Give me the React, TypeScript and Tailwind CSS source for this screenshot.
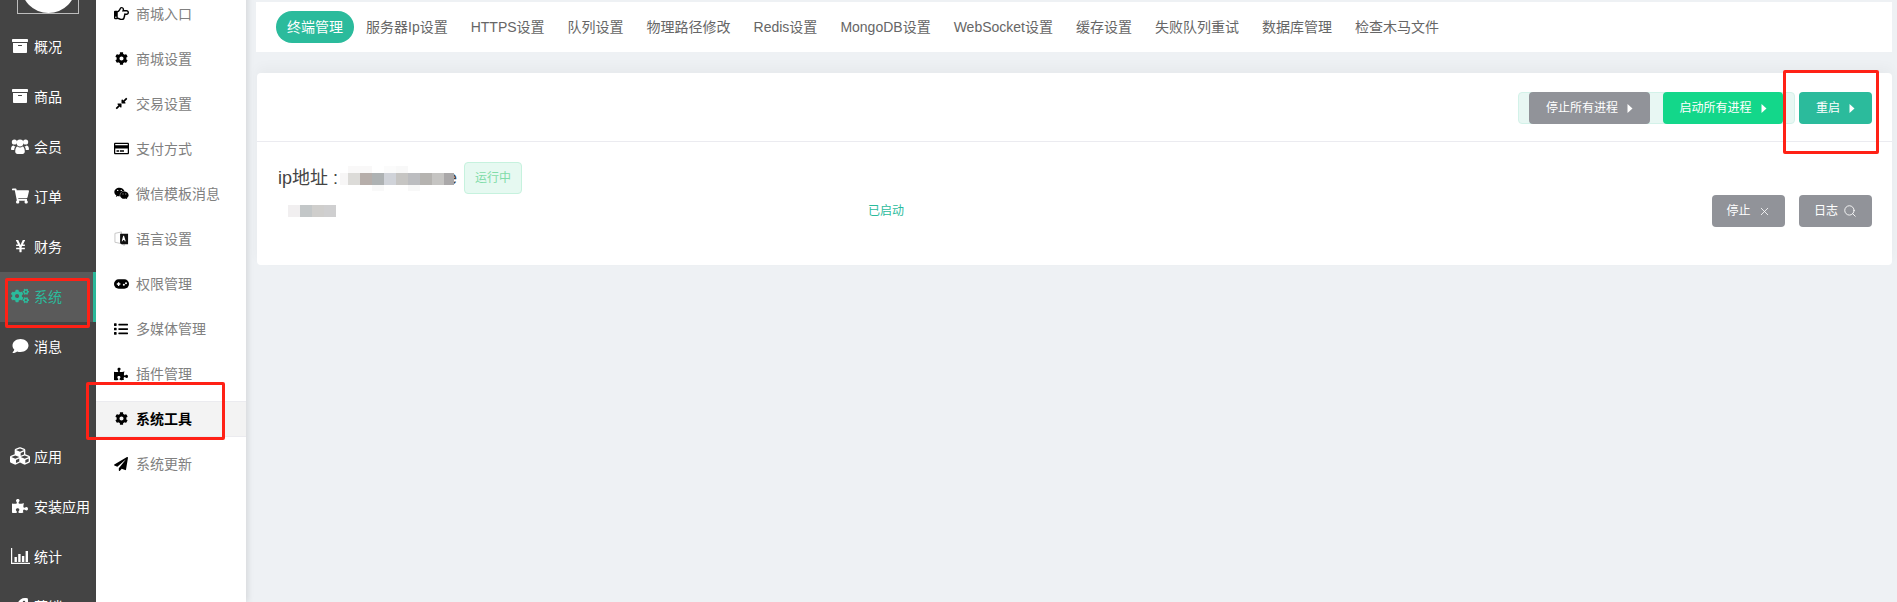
import React from 'react';
import {
  FaArchive,
  FaShoppingCart,
  FaYenSign,
  FaCogs,
  FaComment,
  FaCubes,
  FaPuzzlePiece,
  FaRocket,
  FaRegHandPointRight,
  FaCog,
  FaCompressAlt,
  FaRegCreditCard,
  FaWeixin,
  FaList,
  FaPaperPlane,
} from 'react-icons/fa';
import { X, Search } from 'lucide-react';

type IconProps = { className?: string };

// FontAwesome 4 shapes that the icon packages no longer ship
function UsersIcon({ className }: IconProps) {
  return (
    <svg viewBox="0 0 18 15" fill="currentColor" className={className}>
      <circle cx="3.4" cy="3" r="2.6" />
      <circle cx="14.6" cy="3" r="2.6" />
      <path d="M0 10.5C0 8 1 6.5 2.5 6.5c.6.7 1.3 1 2 1-.9 1-1.3 2-1.3 3.5H1c-.6 0-1-.2-1-.5Z" />
      <path d="M18 10.5C18 8 17 6.5 15.5 6.5c-.6.7-1.3 1-2 1 .9 1 1.3 2 1.3 3.5H17c.6 0 1-.2 1-.5Z" />
      <circle cx="9" cy="4" r="3.4" />
      <path d="M4.2 12.5c0-3 1-5 2.4-5 .7.6 1.5.9 2.4.9s1.700-.3 2.400-.9c1.400 0 2.400 2 2.400 5 0 1.500-1 2.500-2.200 2.500H6.400c-1.200 0-2.200-1-2.200-2.500Z" />
    </svg>
  );
}

function BarsIcon({ className }: IconProps) {
  return (
    <svg viewBox="0 0 19 16" fill="currentColor" className={className}>
      <path d="M0 0h1.200v14.800H19V16H0Z" />
      <rect x="3.500" y="9" width="2.400" height="5" />
      <rect x="7.200" y="6" width="2.400" height="8" />
      <rect x="10.900" y="8" width="2.400" height="6" />
      <rect x="14.600" y="3" width="2.400" height="11" />
    </svg>
  );
}

function LanguageIcon({ className }: IconProps) {
  return (
    <svg viewBox="0 0 16 16" className={className}>
      <path d="M1 2.500 8 1v12.500L1 12Z" fill="none" stroke="#c4c4c4" strokeWidth="1" />
      <path d="M8 13.500 11 15.500V13.500" fill="none" stroke="#c4c4c4" strokeWidth="1" />
      <path d="M6.500 3H15V14H8L6.500 13Z" fill="#111111" />
      <path d="M10.700 5 12.500 11H11.400L10.900 9.500H9.600L9.200 11H8.200L9.800 5Z" fill="#ffffff" />
    </svg>
  );
}

function GamepadIcon({ className }: IconProps) {
  return (
    <svg viewBox="0 0 16 10" className={className}>
      <rect x="0" y="0" width="16" height="10" rx="5" fill="currentColor" />
      <path d="M3 4.200h1.200V3h1.400v1.200h1.200v1.500H5.600V7H4.200V5.700H3Z" fill="#ffffff" />
      <circle cx="10.500" cy="5.800" r="1.100" fill="#ffffff" />
      <circle cx="12.800" cy="4.200" r="1.100" fill="#ffffff" />
    </svg>
  );
}

const mainMenu = [
  { label: '概况', icon: FaArchive, size: 'h-[16px] w-[16px]' },
  { label: '商品', icon: FaArchive, size: 'h-[16px] w-[16px]' },
  { label: '会员', icon: UsersIcon, size: 'h-[15px] w-[18px]' },
  { label: '订单', icon: FaShoppingCart, size: 'h-[16px] w-[17px]' },
  { label: '财务', icon: FaYenSign, size: 'h-[14px] w-[11px]' },
  { label: '系统', icon: FaCogs, size: 'h-[16px] w-[18px]', active: true },
  { label: '消息', icon: FaComment, size: 'h-[16px] w-[17px]' },
];

const appMenu = [
  { label: '应用', icon: FaCubes, size: 'h-[20px] w-[20px]' },
  { label: '安装应用', icon: FaPuzzlePiece, size: 'h-[16px] w-[16px]' },
  { label: '统计', icon: BarsIcon, size: 'h-[16px] w-[19px]' },
  { label: '营销', icon: FaRocket, size: 'h-[16px] w-[16px]' },
];

const subMenu = [
  { label: '商城入口', icon: FaRegHandPointRight, size: 'h-[15px] w-[15px]' },
  { label: '商城设置', icon: FaCog, size: 'h-[13px] w-[13px]' },
  { label: '交易设置', icon: FaCompressAlt, size: 'h-[13px] w-[13px]' },
  { label: '支付方式', icon: FaRegCreditCard, size: 'h-[15px] w-[15px]' },
  { label: '微信模板消息', icon: FaWeixin, size: 'h-[15px] w-[15px]' },
  { label: '语言设置', icon: LanguageIcon, size: 'h-[15px] w-[15px]' },
  { label: '权限管理', icon: GamepadIcon, size: 'h-[10px] w-[15px]' },
  { label: '多媒体管理', icon: FaList, size: 'h-[14px] w-[14px]' },
  { label: '插件管理', icon: FaPuzzlePiece, size: 'h-[14px] w-[14px]' },
  { label: '系统工具', icon: FaCog, size: 'h-[13px] w-[13px]', active: true },
  { label: '系统更新', icon: FaPaperPlane, size: 'h-[14px] w-[14px]' },
];

const tabs = [
  '服务器Ip设置',
  'HTTPS设置',
  '队列设置',
  '物理路径修改',
  'Redis设置',
  'MongoDB设置',
  'WebSocket设置',
  '缓存设置',
  '失败队列重试',
  '数据库管理',
  '检查木马文件',
];

const mosaicTop = ['w-[8px] bg-white', 'w-[24px] bg-[#f9f8f8]', 'w-[12px] bg-white', 'w-[12px] bg-[#fbfbfb]', 'w-[12px] bg-[#f8f8f8]'];
const mosaicMiddle = ['bg-[#f7f6f6] w-[8px]', 'bg-[#dcdbd8] w-[12px]', 'bg-[#b6aeaa] w-[12px]', 'bg-[#aeb2b3] w-[12px]', 'bg-[#d0d3d9] w-[12px]', 'bg-[#c6c5c3] w-[12px]', 'bg-[#bcbdc0] w-[12px]', 'bg-[#b5b3b0] w-[12px]', 'bg-[#c5c4c2] w-[12px]', 'bg-[#aaa8a9] w-[10px]'];
const mosaicBottom = ['w-[32px] bg-white', 'w-[12px] bg-[#f9f9f9]', 'w-[24px] bg-white', 'w-[12px] bg-[#f8f8f8]'];
const mosaicRow = ['bg-[#f1eff0]', 'bg-[#c3c7c8]', 'bg-[#cfcecc]', 'bg-[#cfcfd0]'];

function Caret() {
  return (
    <svg width="6" height="9" viewBox="0 0 6 9" className="ml-[9px]">
      <polygon points="0.5,0 5.5,4.5 0.5,9" fill="currentColor" />
    </svg>
  );
}

function ActionButton({ className, children }: { className: string; children: React.ReactNode }) {
  return (
    <div className={`flex h-8 items-center justify-center rounded-[4px] text-xs text-white ${className}`}>
      {children}
    </div>
  );
}

function SideItem({
  label,
  icon: Icon,
  size,
  active,
}: {
  label: string;
  icon: React.ElementType;
  size: string;
  active?: boolean;
}) {
  return (
    <div
      className={`flex h-[50px] items-center border-r-[3px] text-sm ${
        active ? 'border-[#2bbb9c] bg-[#5a5a5a] text-[#2bbb9c]' : 'border-transparent text-white'
      }`}
    >
      <span className="flex w-[34px] justify-center pl-[6px] pb-[2px]">
        <Icon className={size} />
      </span>
      <span className="whitespace-nowrap">{label}</span>
    </div>
  );
}

function Overlay({ className }: { className: string }) {
  return <div className={`pointer-events-none absolute z-20 rounded-[2px] border-[3px] border-[#ff2116] ${className}`} />;
}

export default function App() {
  return (
    <div className="relative flex h-[602px] w-[1897px] overflow-hidden bg-[#eef1f4] font-['Liberation_Sans','Noto_Sans_CJK_SC',sans-serif]">
      {/* Main menu */}
      <aside className="w-[96px] shrink-0 bg-[#444444]">
        <div className="mx-[17px] mb-[8px] h-[14px] overflow-hidden border border-t-0 border-[#bdbdbd]">
          <div className="mx-auto -mt-[42px] h-[55px] w-[55px] rounded-full bg-white" />
        </div>
        {mainMenu.map((item) => (
          <SideItem key={item.label} {...item} />
        ))}
        <div className="h-[60px]" />
        {appMenu.map((item) => (
          <SideItem key={item.label} {...item} />
        ))}
      </aside>

      {/* Sub menu */}
      <nav className="z-10 -mt-[9px] w-[150px] shrink-0 bg-white shadow-[2px_0_6px_rgba(0,0,0,0.1)]">
        {subMenu.map(({ label, icon: Icon, size, active }) => (
          <div key={label} className="flex h-[45px] items-center">
            <div
              className={`flex h-[36px] w-full items-center text-sm ${
                active ? 'border-y border-[#ebebef] bg-[#f3f3f3] font-bold text-black' : 'text-[#808080]'
              }`}
            >
              <span className="flex w-[40px] justify-center pl-[10px] text-black">
                <Icon className={size} />
              </span>
              <span className="whitespace-nowrap">{label}</span>
            </div>
          </div>
        ))}
      </nav>

      {/* Content */}
      <main className="flex-1 pl-[10px] pr-[5px] pt-[2px]">
        <div className="flex h-[50px] items-center gap-px bg-white pl-[20px] text-sm text-[#666666]">
          <div className="flex h-8 items-center rounded-full bg-[#2bbb9c] px-[11px] text-white">终端管理</div>
          {tabs.map((tab) => (
            <div key={tab} className="whitespace-nowrap px-[11px]">
              {tab}
            </div>
          ))}
        </div>

        <div className="ml-px mt-[21px] h-[192px] rounded-[4px] bg-white shadow-[0_-6px_12px_rgba(0,0,0,0.03)]">
          <div className="flex h-[69px] items-start justify-end border-b border-[#ebebf0] pr-5 pt-[19px]">
            <div className="mr-1 flex h-8 items-center gap-[13px] rounded-[4px] border border-[#d3f2e9] bg-[#e8f7f3] pl-[10px] pr-[11px]">
              <ActionButton className="w-[121px] bg-[#919399]">
                停止所有进程
                <Caret />
              </ActionButton>
              <ActionButton className="w-[120px] bg-[#13d78a]">
                启动所有进程
                <Caret />
              </ActionButton>
            </div>
            <ActionButton className="w-[73px] bg-[#2bbb9c]">
              重启
              <Caret />
            </ActionButton>
          </div>

          <div className="px-5 pl-[21px] pt-[20px]">
            <div className="flex h-8 items-center">
              <span className="text-lg text-[#444444]">ip地址 :</span>
              <div className="relative z-[1] ml-[2px] flex flex-col">
                <div className="flex h-[7px]">
                  {mosaicTop.map((c, i) => (
                    <div key={i} className={c} />
                  ))}
                </div>
                <div className="flex h-[12px]">
                  {mosaicMiddle.map((c, i) => (
                    <div key={i} className={c} />
                  ))}
                </div>
                <div className="flex h-[6px]">
                  {mosaicBottom.map((c, i) => (
                    <div key={i} className={c} />
                  ))}
                </div>
              </div>
              <span className="-ml-[7px] text-lg text-[#444444]">e</span>
              <div className="ml-[7px] flex h-8 w-[58px] items-center justify-center rounded-[4px] border border-[#c6f2de] bg-[#e6f9f1] text-xs text-[#7fdca8]">
                运行中
              </div>
            </div>

            <div className="mt-px flex h-8 items-center">
              <div className="ml-[10px] flex h-3 w-[48px]">
                {mosaicRow.map((c, i) => (
                  <div key={i} className={`h-3 w-3 ${c}`} />
                ))}
              </div>
              <span className="ml-[532px] text-xs text-[#2bbb9c]">已启动</span>
              <div className="ml-auto flex gap-[14px]">
                <ActionButton className="w-[73px] bg-[#919399]">
                  停止
                  <X className="ml-[7px] h-[13px] w-[13px]" strokeWidth={1.5} />
                </ActionButton>
                <ActionButton className="w-[73px] bg-[#919399]">
                  日志
                  <Search className="ml-[5px] h-[14px] w-[14px]" strokeWidth={1.5} />
                </ActionButton>
              </div>
            </div>
          </div>
        </div>
      </main>

      {/* Annotations drawn on the screenshot */}
      <Overlay className="left-[5px] top-[278px] h-[50px] w-[85px]" />
      <Overlay className="left-[86px] top-[382px] h-[58px] w-[139px]" />
      <Overlay className="left-[1783px] top-[70px] h-[84px] w-[96px]" />
    </div>
  );
}
